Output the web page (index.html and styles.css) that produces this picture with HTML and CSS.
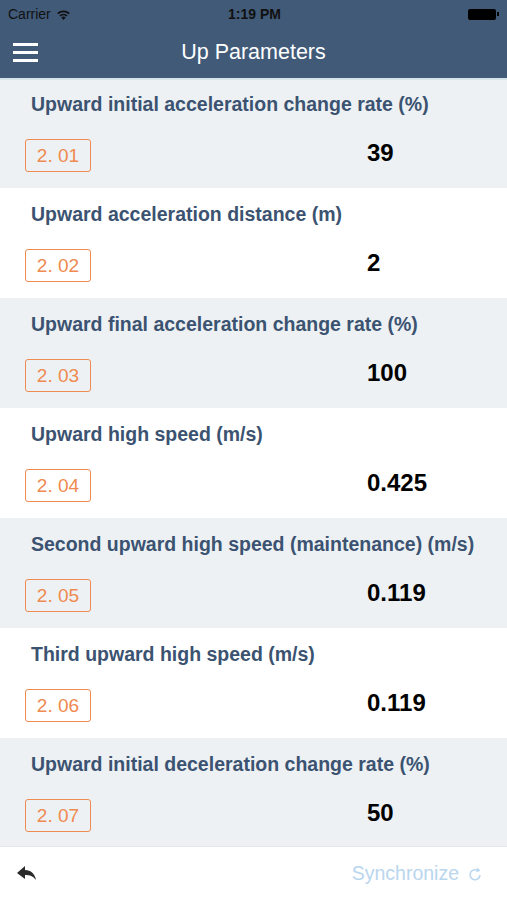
FILE: index.html
```html
<!DOCTYPE html>
<html lang="en">
<head>
    <meta charset="UTF-8">
    <meta name="viewport" content="width=device-width, initial-scale=1.0">
    <title>Up Parameters</title>
    <link rel="stylesheet" href="styles.css">
</head>
<body>

    <!-- Status bar + nav -->
    <header>
        <div class="status-bar">
            <div class="carrier">
                Carrier
                <svg class="wifi" width="15" height="11" viewBox="0 0 15 11">
                    <path d="M7.5 11 L5.3 8.4 A3.3 3.3 0 0 1 9.7 8.4 Z" fill="#111"/>
                    <path d="M3.4 6.3 A6 6 0 0 1 11.6 6.3 L10.4 7.6 A4.3 4.3 0 0 0 4.6 7.6 Z" fill="#111"/>
                    <path d="M1.2 4 A9.2 9.2 0 0 1 13.8 4 L12.6 5.3 A7.5 7.5 0 0 0 2.4 5.3 Z" fill="#111"/>
                </svg>
            </div>
            <div class="time">1:19 PM</div>
            <div class="battery"><span class="battery-fill"></span><span class="battery-tip"></span></div>
        </div>
        <nav class="nav-bar">
            <div class="menu">
                <span></span><span></span><span></span>
            </div>
            <div class="title">Up Parameters</div>
        </nav>
    </header>

    <!-- Parameter list -->
    <div class="param-list">
        <div class="param shaded">
            <div class="param-label">Upward initial acceleration change rate (%)</div>
            <div class="param-row">
                <span class="code">2. 01</span>
                <span class="value">39</span>
            </div>
        </div>
        <div class="param">
            <div class="param-label">Upward acceleration distance (m)</div>
            <div class="param-row">
                <span class="code">2. 02</span>
                <span class="value">2</span>
            </div>
        </div>
        <div class="param shaded">
            <div class="param-label">Upward final acceleration change rate (%)</div>
            <div class="param-row">
                <span class="code">2. 03</span>
                <span class="value">100</span>
            </div>
        </div>
        <div class="param">
            <div class="param-label">Upward high speed (m/s)</div>
            <div class="param-row">
                <span class="code">2. 04</span>
                <span class="value">0.425</span>
            </div>
        </div>
        <div class="param shaded">
            <div class="param-label">Second upward high speed (maintenance) (m/s)</div>
            <div class="param-row">
                <span class="code">2. 05</span>
                <span class="value">0.119</span>
            </div>
        </div>
        <div class="param">
            <div class="param-label">Third upward high speed (m/s)</div>
            <div class="param-row">
                <span class="code">2. 06</span>
                <span class="value">0.119</span>
            </div>
        </div>
        <div class="param shaded">
            <div class="param-label">Upward initial deceleration change rate (%)</div>
            <div class="param-row">
                <span class="code">2. 07</span>
                <span class="value">50</span>
            </div>
        </div>
    </div>

    <!-- Bottom toolbar -->
    <footer class="toolbar">
        <svg class="back" width="20" height="16" viewBox="0 0 20 16">
            <path d="M0 7 L8 0 L8 4 C14 4 18 8 19 14 C16 10 13 9 8 9 L8 13 Z" fill="#2b2b2b"/>
        </svg>
        <div class="sync">
            Synchronize
            <svg width="14" height="16" viewBox="0 0 14 16">
                <path d="M10.5 5.2 A5 5 0 1 0 12 9" fill="none" stroke="#b9d6ee" stroke-width="1.5"/>
                <path d="M9 1.5 L12.5 4.8 L8.4 6.2 Z" fill="#b9d6ee"/>
            </svg>
        </div>
    </footer>

</body>
</html>
```

FILE: styles.css
```css
body {
    font-family: "Liberation Sans", Arial, sans-serif;
    margin: 0;
    padding: 0;
    background: #fff;
    width: 507px;
    height: 900px;
    overflow: hidden;
}

/* Header */
header {
    background: #405a78;
    border-bottom: 2px solid #d7e5ea;
}

.status-bar {
    height: 28px;
    display: grid;
    grid-template-columns: 1fr auto 1fr;
    align-items: center;
    padding: 0 8px;
    font-size: 14px;
    color: #111;
}

.carrier {
    display: flex;
    align-items: center;
    gap: 5px;
}

.time {
    font-weight: bold;
    margin-left: 2px;
}

.battery {
    justify-self: end;
    display: flex;
    align-items: center;
}

.battery-fill {
    width: 28px;
    height: 11px;
    background: #000;
    border-radius: 2px;
}

.battery-tip {
    width: 2px;
    height: 4px;
    background: #000;
    margin-left: 1px;
}

.nav-bar {
    height: 50px;
    display: flex;
    align-items: center;
    position: relative;
}

.menu {
    display: flex;
    flex-direction: column;
    gap: 5px;
    padding-left: 13px;
    margin-top: -2px;
}

.menu span {
    display: block;
    width: 25px;
    height: 3px;
    background: #fff;
}

.title {
    position: absolute;
    left: 0;
    right: 0;
    text-align: center;
    color: #fff;
    font-size: 21.5px;
    margin-top: -2px;
}

/* Parameter rows */
.param {
    height: 110px;
    box-sizing: border-box;
    padding: 14px 0 0 25px;
}

.param.shaded {
    background: #edf1f4;
}

.param:first-child,
.param:last-child {
    height: 108px;
}

.param:first-child {
    padding-top: 12px;
}

.param-label {
    margin-left: 6px;
    font-size: 19.5px;
    font-weight: bold;
    line-height: 24px;
    color: #3b5371;
}

.param-row {
    display: grid;
    grid-template-columns: 342px 1fr;
    align-items: center;
    margin-top: 23px;
}

.code {
    width: 66px;
    height: 33px;
    box-sizing: border-box;
    border: 1px solid #ef8a50;
    border-radius: 3px;
    color: #ef8a50;
    font-size: 19px;
    display: flex;
    align-items: center;
    justify-content: center;
}

.value {
    font-size: 24px;
    font-weight: bold;
    color: #000;
    padding-bottom: 5px;
}

/* Bottom toolbar */
.toolbar {
    height: 54px;
    box-sizing: border-box;
    border-top: 1px solid #e3e6e8;
    display: flex;
    align-items: center;
    justify-content: space-between;
    padding: 0 25px 0 17px;
}

.sync {
    display: flex;
    align-items: center;
    gap: 9px;
    color: #b9d6ee;
    font-size: 19.5px;
}
```
